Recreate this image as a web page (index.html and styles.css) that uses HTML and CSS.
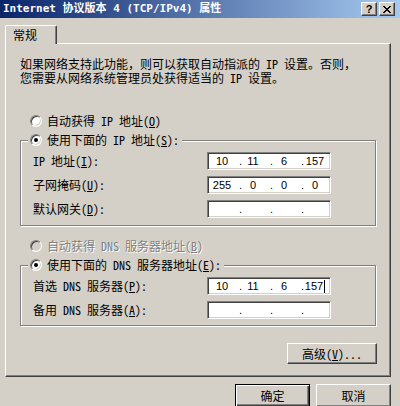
FILE: index.html
```html
<!DOCTYPE html>
<html lang="zh-CN">
<head>
<meta charset="utf-8">
<title>Internet 协议版本 4 (TCP/IPv4) 属性</title>
<link rel="stylesheet" href="styles.css">
</head>
<body>
<div class="window">
  <div class="titlebar">
    <span class="title">Internet 协议版本 4 (TCP/IPv4) 属性</span>
    <div class="caption-buttons">
      <span class="cap-btn help">?</span>
      <span class="cap-btn close"><svg width="8" height="7" viewBox="0 0 8 7" shape-rendering="crispEdges"><path d="M0 0h2v1H0zM6 0h2v1H6zM1 1h2v1H1zM5 1h2v1H5zM2 2h4v1H2zM3 3h2v1H3zM2 4h4v1H2zM1 5h2v1H1zM5 5h2v1H5zM0 6h2v1H0zM6 6h2v1H6z" fill="#000"/></svg></span>
    </div>
  </div>

  <div class="tabs"><div class="tab">常规</div></div>

  <div class="panel">
    <p class="intro">如果网络支持此功能，则可以获取自动指派的 IP 设置。否则，<br>您需要从网络系统管理员处获得适当的 IP 设置。</p>

    <div class="radio-row first"><span class="radio"></span><span>自动获得 IP 地址(<u>O</u>)</span></div>

    <fieldset class="group">
      <legend><span class="radio checked"></span><span>使用下面的 IP 地址(<u>S</u>):</span></legend>
      <div class="fields">
        <label>IP 地址(<u>I</u>):</label>
        <div class="ipbox"><span class="oct">10</span><span class="dot">.</span><span class="oct">11</span><span class="dot">.</span><span class="oct">6</span><span class="dot">.</span><span class="oct">157</span></div>
        <label>子网掩码(<u>U</u>):</label>
        <div class="ipbox"><span class="oct">255</span><span class="dot">.</span><span class="oct">0</span><span class="dot">.</span><span class="oct">0</span><span class="dot">.</span><span class="oct">0</span></div>
        <label>默认网关(<u>D</u>):</label>
        <div class="ipbox"><span class="oct"></span><span class="dot">.</span><span class="oct"></span><span class="dot">.</span><span class="oct"></span><span class="dot">.</span><span class="oct"></span></div>
      </div>
    </fieldset>

    <div class="radio-row disabled"><span class="radio"></span><span>自动获得 DNS 服务器地址(<u>B</u>)</span></div>

    <fieldset class="group dns">
      <legend><span class="radio checked"></span><span>使用下面的 DNS 服务器地址(<u>E</u>):</span></legend>
      <div class="fields">
        <label>首选 DNS 服务器(<u>P</u>):</label>
        <div class="ipbox"><span class="oct">10</span><span class="dot">.</span><span class="oct">11</span><span class="dot">.</span><span class="oct">6</span><span class="dot">.</span><span class="oct">157<i class="caret"></i></span></div>
        <label>备用 DNS 服务器(<u>A</u>):</label>
        <div class="ipbox"><span class="oct"></span><span class="dot">.</span><span class="oct"></span><span class="dot">.</span><span class="oct"></span><span class="dot">.</span><span class="oct"></span></div>
      </div>
    </fieldset>

    <div class="adv-row"><button class="btn adv">高级(<u>V</u>)...</button></div>
  </div>

  <div class="footer">
    <button class="btn default">确定</button>
    <button class="btn">取消</button>
  </div>
</div>
</body>
</html>
```

FILE: styles.css
```css
* { box-sizing: border-box; }
html, body { margin: 0; padding: 0; }
body {
  background: #d4d0c8;
  color: #000;
  font: 12px/14px "Noto Sans Mono CJK SC", "DejaVu Sans Mono", "Noto Sans CJK SC", monospace;
}
.window {
  width: 400px;
  height: 406px;
  overflow: hidden;
  background: #d4d0c8;
}

/* title bar */
.titlebar {
  height: 18px;
  display: flex;
  align-items: center;
  justify-content: space-between;
  padding: 0 5px 0 3px;
  background: linear-gradient(to right, #0a246a, #a6caf0);
}
.title {
  color: #fff;
  font: bold 11px/14px "DejaVu Sans Mono", "Noto Sans CJK SC", monospace;
  white-space: nowrap;
}
.caption-buttons { display: flex; gap: 2px; }
.cap-btn {
  width: 16px;
  height: 14px;
  display: flex;
  align-items: center;
  justify-content: center;
  background: #d4d0c8;
  border: 1px solid;
  border-color: #fff #404040 #404040 #fff;
  box-shadow: inset -1px -1px #808080;
}
.help {
  font: bold 11px/12px "Liberation Sans", sans-serif;
  color: #000;
}

/* tab */
.tabs { display: flex; padding-left: 5px; margin-top: 7px; }
.tab {
  position: relative;
  z-index: 1;
  width: 52px;
  height: 19px;
  margin-bottom: -1px;
  padding: 2px 0 0 7px;
  background: #d4d0c8;
  border: 1px solid;
  border-color: #fff #404040 transparent #fff;
  border-bottom: none;
  border-radius: 2px 2px 0 0;
  box-shadow: inset -1px 0 #808080;
}

/* panel */
.panel {
  width: 386px;
  height: 334px;
  margin-left: 5px;
  border: 1px solid;
  border-color: #fff #404040 #404040 #fff;
  box-shadow: inset -1px -1px #808080;
  padding: 13px 14px 0 14px;
}
.intro {
  margin: 0;
  line-height: 14px;
  white-space: nowrap;
}

/* radios */
.radio-row {
  display: flex;
  align-items: center;
  height: 14px;
  padding-left: 10px;
  white-space: nowrap;
}
.radio-row.first { margin-top: 29px; }
.radio-row.disabled { margin-top: 13px; color: #808080; text-shadow: 1px 1px 0 #fff; }
.radio {
  flex: none;
  width: 12px;
  height: 12px;
  margin-right: 5px;
  border-radius: 50%;
  border: 1px solid;
  border-color: #808080 #fff #fff #808080;
  background: #fff;
  box-shadow: inset 1px 1px #404040, inset -1px -1px #d4d0c8;
  display: flex;
  align-items: center;
  justify-content: center;
}
.radio.checked::after {
  content: "";
  width: 4px;
  height: 4px;
  border-radius: 50%;
  background: #000;
}
.disabled .radio { background: #d4d0c8; }

/* group boxes */
.group {
  margin: 5px 0 0;
  padding: 0;
  min-width: 0;
  border: 1px solid #808080;
  box-shadow: inset 1px 1px #fff, 1px 1px #fff;
}
.group legend {
  display: flex;
  align-items: center;
  height: 14px;
  margin-left: 7px;
  padding: 0 3px 0 2px;
  background: #d4d0c8;
  white-space: nowrap;
}
.fields {
  display: grid;
  grid-template-columns: 174px 124px;
  grid-auto-rows: 18px;
  row-gap: 6px;
  align-items: center;
  padding: 5px 0 7px 12px;
}
.dns .fields { padding-bottom: 6px; }
.fields label { white-space: nowrap; }

/* IP address boxes */
.ipbox {
  width: 124px;
  height: 18px;
  display: flex;
  align-items: center;
  padding-left: 3px;
  background: #fff;
  border: 1px solid;
  border-color: #808080 #fff #fff #808080;
  box-shadow: inset 1px 1px #404040, inset -1px -1px #d4d0c8;
  font: 11px/14px "Liberation Sans", sans-serif;
}
.oct { width: 22px; text-align: center; white-space: nowrap; }
.dot { width: 9px; text-align: right; }
.caret {
  display: inline-block;
  width: 1px;
  height: 13px;
  margin-left: 1px;
  background: #000;
  vertical-align: middle;
}

/* buttons */
.btn {
  height: 23px;
  width: 75px;
  padding: 0;
  background: #d4d0c8;
  border: 1px solid;
  border-color: #fff #404040 #404040 #fff;
  box-shadow: inset -1px -1px #808080;
  font: inherit;
  color: #000;
  border-radius: 0;
}
.btn.default {
  border: 1px solid #000;
  box-shadow: inset 1px 1px #fff, inset -1px -1px #404040, inset -2px -2px #808080;
}
.adv-row {
  display: flex;
  justify-content: flex-end;
  margin-top: 17px;
  margin-right: -1px;
}
.btn.adv { width: 90px; height: 21px; }
.footer {
  display: flex;
  justify-content: flex-end;
  gap: 6px;
  margin-top: 7px;
  padding-right: 9px;
}
```
